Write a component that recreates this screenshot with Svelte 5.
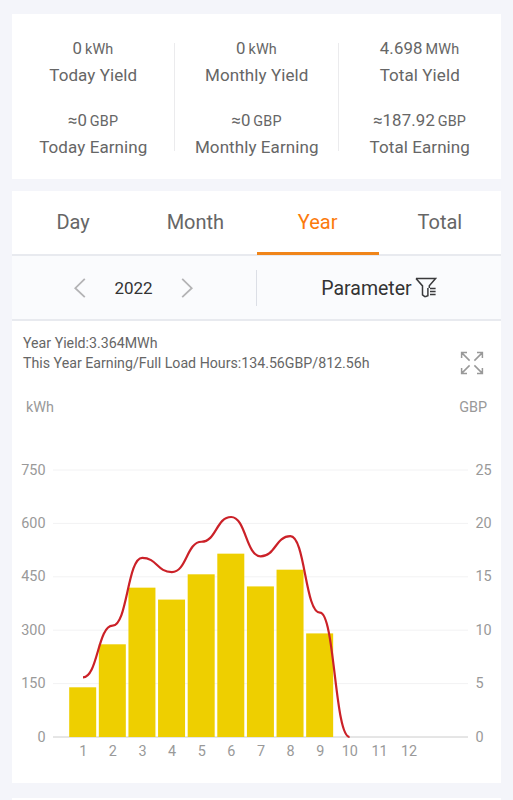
<script lang="ts">
    interface Reading {
        value: string;
        unit: string;
        label: string;
    }

    const summary: Reading[][] = [
        [
            { value: "0", unit: "kWh", label: "Today Yield" },
            { value: "≈0", unit: "GBP", label: "Today Earning" },
        ],
        [
            { value: "0", unit: "kWh", label: "Monthly Yield" },
            { value: "≈0", unit: "GBP", label: "Monthly Earning" },
        ],
        [
            { value: "4.698", unit: "MWh", label: "Total Yield" },
            { value: "≈187.92", unit: "GBP", label: "Total Earning" },
        ],
    ];

    const tabs = ["Day", "Month", "Year", "Total"];
    let activeTab = $state("Year");
    let year = $state(2022);

    const months = [1, 2, 3, 4, 5, 6, 7, 8, 9, 10, 11, 12];
    const yields = [139.6, 260.4, 419.5, 386, 457, 515, 423, 470, 291];
    const earnings = [5.58, 10.42, 16.77, 15.44, 18.28, 20.6, 16.92, 18.8, 11.64, 0];
    const ticks = [0, 1, 2, 3, 4, 5];

    const baseY = 342;
    const rowHeight = 53.4;
    const step = 29.62;
    const barWidth = 27;

    const monthX = (i: number) => 71 + i * step;
    const yieldY = (v: number) => baseY - (v / 150) * rowHeight;
    const earningY = (v: number) => baseY - (v / 5) * rowHeight;

    // flat tangent at every month
    const linePath = earnings
        .map((v, i) => {
            const x = monthX(i);
            const y = earningY(v);
            if (i === 0) return `M${x} ${y}`;
            const px = x - step;
            return `C${px + step / 2} ${earningY(earnings[i - 1])} ${x - step / 2} ${y} ${x} ${y}`;
        })
        .join(" ");
</script>

<main>
    <section class="card summary">
        {#each summary as column}
            <div class="column">
                {#each column as item}
                    <div class="reading">
                        <div class="value">{item.value} <small>{item.unit}</small></div>
                        <div class="label">{item.label}</div>
                    </div>
                {/each}
            </div>
        {/each}
    </section>

    <section class="card report">
        <nav class="tabs">
            {#each tabs as tab}
                <button class="tab" class:active={tab === activeTab} onclick={() => (activeTab = tab)}>
                    {tab}
                </button>
            {/each}
        </nav>

        <div class="toolbar">
            <div class="picker">
                <button aria-label="Previous year" onclick={() => year--}>
                    <svg width="12" height="20" viewBox="0 0 12 20">
                        <path d="M10.8 .9 1.3 10.2l9.5 9" />
                    </svg>
                </button>
                <span class="year">{year}</span>
                <button aria-label="Next year" onclick={() => year++}>
                    <svg width="12" height="20" viewBox="0 0 12 20">
                        <path d="M1.2 .9l9.5 9.3-9.5 9" />
                    </svg>
                </button>
            </div>
            <button class="parameter">
                <span>Parameter</span>
                <svg width="22" height="22" viewBox="0 0 22 22">
                    <path d="M1 1.5h19.6l-6.3 7.2v2.3M1 1.5l6.5 7.4v8.9l2.6 2" />
                    <path d="M12.9 11v7.8l-2.8 1M15 11.4h5.6M15 14.4h5.6M15 17.4h5.6" />
                </svg>
            </button>
        </div>

        <div class="details">
            <div>
                <p>Year Yield:3.364MWh</p>
                <p>This Year Earning/Full Load Hours:134.56GBP/812.56h</p>
            </div>
            <button class="expand" aria-label="Full screen">
                <svg width="24" height="24" viewBox="0 0 24 24">
                    <path d="M1.6 7V1.6H7M1.6 1.6l8 8M17 1.6h5.4V7M22.4 1.6l-8 8" />
                    <path d="M1.6 17v5.4H7M1.6 22.4l8-8M17 22.4h5.4V17M22.4 22.4l-8-8" />
                </svg>
            </button>
        </div>

        <svg class="chart" width="489" height="388" viewBox="0 0 489 388">
            <text x="14" y="16.5">kWh</text>
            <text x="475" y="16.5" text-anchor="end">GBP</text>

            {#each ticks as t}
                {@const y = baseY - t * rowHeight}
                <line class:axis={t === 0} x1="41" x2="456" y1={y} y2={y} />
                <text x="33.5" y={y + 4.6} text-anchor="end">{t * 150}</text>
                <text x="463.5" y={y + 4.6}>{t * 5}</text>
            {/each}

            {#each yields as v, i}
                <rect
                    x={monthX(i) - barWidth / 2 - 0.3}
                    y={yieldY(v)}
                    width={barWidth}
                    height={baseY - yieldY(v)}
                />
            {/each}

            <path d={linePath} />

            {#each months as m, i}
                <text x={monthX(i) + 0.3} y="361" text-anchor="middle">{m}</text>
            {/each}
        </svg>
    </section>

    <section class="card next"></section>
</main>

<style>
    :global(body) {
        background: #f4f5fa;
    }

    main {
        height: 800px;
        box-sizing: border-box;
        padding: 14px 12px 0;
        overflow: hidden;
        font-family: Roboto, sans-serif;
        color: #666;
    }

    button {
        padding: 0;
        border: 0;
        background: none;
        font: inherit;
        color: inherit;
    }

    svg {
        display: block;
        fill: none;
    }

    .card {
        background: #fff;
    }

    .summary {
        display: grid;
        grid-template-columns: 163px 164px 162px;
        height: 165px;
        padding: 29px 0 28px;
        box-sizing: border-box;
    }

    .column {
        display: grid;
        grid-auto-rows: 72px;
        align-content: start;
        height: 108px;
        text-align: center;
    }

    .column + .column {
        box-shadow: -1px 0 #ebebed;
    }

    .reading {
        margin-top: -4px;
    }

    .value {
        margin-left: -1px;
        font-size: 16.8px;
        line-height: 18px;
        letter-spacing: 0.15px;
    }

    .value small {
        margin-left: -1.5px;
        font-size: 14.4px;
    }

    .label {
        margin-left: -0.5px;
        font-size: 17px;
        line-height: 32px;
        letter-spacing: 0.08px;
    }

    .report {
        height: 592px;
        margin-top: 12px;
    }

    .tabs {
        display: grid;
        grid-template-columns: repeat(4, 1fr);
        height: 65px;
        box-sizing: border-box;
        border-bottom: 2px solid #e8eaef;
    }

    .tab {
        height: 64px;
        border-bottom: 3px solid transparent;
        font-size: 20px;
    }

    .tab.active {
        border-color: #f08519;
        color: #fc7a0c;
    }

    .toolbar {
        display: flex;
        align-items: center;
        height: 65px;
        box-sizing: border-box;
        border-bottom: 2px solid #e8eaef;
        background: #fafbfd;
        color: #333;
    }

    .picker {
        display: flex;
        align-items: center;
        justify-content: center;
        gap: 28px;
        width: 245px;
        height: 36px;
        padding-right: 1px;
        box-sizing: border-box;
        border-right: 1px solid #dcdfe6;
    }

    .picker path {
        stroke: #b3b3b5;
        stroke-width: 1.8;
    }

    .year {
        font-size: 17px;
    }

    .parameter {
        display: flex;
        flex: 1;
        align-items: center;
        justify-content: center;
        gap: 3px;
        font-size: 19.5px;
    }

    .parameter span {
        padding-top: 2px;
    }

    .parameter path {
        stroke: #3a3a3c;
        stroke-width: 1.5;
    }

    .details {
        display: flex;
        justify-content: space-between;
        height: 74px;
        padding: 12px 17px 0 11px;
        box-sizing: border-box;
        font-size: 14.2px;
        line-height: 20px;
    }

    p {
        margin: 0;
    }

    .expand {
        align-self: flex-start;
        margin-top: 18px;
    }

    .expand path {
        stroke: #999;
        stroke-width: 1.5;
    }

    .chart text {
        fill: #999;
        font-size: 14.4px;
    }

    .chart line {
        stroke: #f2f2f3;
    }

    .chart line.axis {
        stroke: #ccc;
    }

    .chart rect {
        fill: #eecf00;
    }

    .chart path {
        stroke: #cb2128;
        stroke-width: 2.2;
    }

    .next {
        height: 20px;
        margin-top: 15px;
    }
</style>
